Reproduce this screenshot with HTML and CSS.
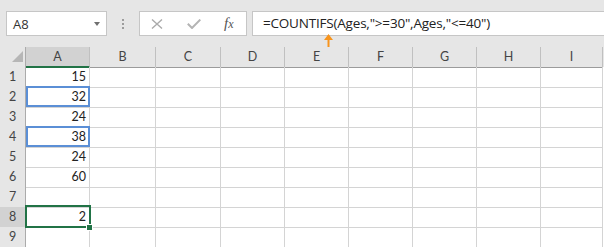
FILE: index.html
```html
<!DOCTYPE html>
<html lang="en">
<head>
<meta charset="UTF-8">
<meta name="viewport" content="width=device-width, initial-scale=1.0">
<title>COUNTIFS</title>
<link rel="stylesheet" href="styles.css">
</head>
<body>

<div class="ribbon">
    <div class="namebox"><span>A8</span><span class="caret"></span></div>
    <div class="grip"><i></i><i></i><i></i></div>
    <div class="fbtns">
        <svg width="12" height="10" viewBox="0 0 12 10"><path d="M1 0.5 L11 9.5 M11 0.5 L1 9.5" stroke="#ababab" stroke-width="1.4" fill="none"/></svg>
        <svg width="14" height="10" viewBox="0 0 14 10"><path d="M0.8 4.8 L5 9 L13.3 0.6" stroke="#b4b4b4" stroke-width="2" fill="none"/></svg>
        <span class="fx">f<small>x</small></span>
    </div>
    <div class="formula">=COUNTIFS(Ages,"&gt;=30",Ages,"&lt;=40")</div>
    <svg class="pointer" width="9" height="13" viewBox="0 0 9 13"><path d="M4.5 0 L9 6 L5.5 6 L5.5 13 L3.5 13 L3.5 6 L0 6 Z" fill="#f7941d"/></svg>
</div>

<div class="sheet">
    <div class="row head">
        <div class="corner"><svg width="26" height="19" viewBox="0 0 26 19"><path d="M23 4 L23 15 L12 15 Z" fill="#b6b6b6"/></svg></div>
        <div class="on">A</div><div>B</div><div>C</div><div>D</div><div>E</div><div>F</div><div>G</div><div>H</div><div>I</div><span></span>
    </div>
    <div class="row"><b>1</b><div class="num">15</div><div></div><div></div><div></div><div></div><div></div><div></div><div></div><div></div><span></span></div>
    <div class="row"><b>2</b><div class="num ref">32</div><div></div><div></div><div></div><div></div><div></div><div></div><div></div><div></div><span></span></div>
    <div class="row"><b>3</b><div class="num">24</div><div></div><div></div><div></div><div></div><div></div><div></div><div></div><div></div><span></span></div>
    <div class="row"><b>4</b><div class="num ref">38</div><div></div><div></div><div></div><div></div><div></div><div></div><div></div><div></div><span></span></div>
    <div class="row"><b>5</b><div class="num">24</div><div></div><div></div><div></div><div></div><div></div><div></div><div></div><div></div><span></span></div>
    <div class="row"><b>6</b><div class="num">60</div><div></div><div></div><div></div><div></div><div></div><div></div><div></div><div></div><span></span></div>
    <div class="row"><b>7</b><div class="num"></div><div></div><div></div><div></div><div></div><div></div><div></div><div></div><div></div><span></span></div>
    <div class="row"><b class="on">8</b><div class="num active">2</div><div></div><div></div><div></div><div></div><div></div><div></div><div></div><div></div><span></span></div>
    <div class="row"><b>9</b><div class="num"></div><div></div><div></div><div></div><div></div><div></div><div></div><div></div><div></div><span></span></div>
</div>

</body>
</html>
```

FILE: styles.css
```css
body {
    margin: 0;
    background: #fff;
    overflow: hidden;
}

.ribbon {
    position: relative;
    display: flex;
    align-items: flex-start;
    height: 47px;
    box-sizing: border-box;
    padding: 11px 0 0 6px;
    background: #e6e6e6;
    font-family: "Open Sans", sans-serif;
}

.namebox {
    display: flex;
    align-items: center;
    width: 101px;
    height: 25px;
    box-sizing: border-box;
    padding-left: 6px;
    background: #fff;
    border: 1px solid #c6c6c6;
    font-size: 13px;
    color: #333;
}

.caret {
    margin-left: auto;
    margin-right: 6px;
    border-left: 3.5px solid transparent;
    border-right: 3.5px solid transparent;
    border-top: 4px solid #707070;
}

.grip {
    display: flex;
    flex-direction: column;
    align-items: center;
    gap: 2px;
    width: 32px;
    padding-top: 8px;
}

.grip i {
    width: 2px;
    height: 2px;
    background: #9c9c9c;
}

.fbtns {
    display: flex;
    align-items: center;
    gap: 24px;
    width: 108px;
    height: 25px;
    box-sizing: border-box;
    padding-left: 11px;
    background: #fff;
    border: 1px solid #c6c6c6;
}

.fx {
    font-family: "Liberation Serif", serif;
    font-style: italic;
    font-size: 15px;
    color: #555;
    margin-left: -1px;
}

.fx small {
    font-size: 12px;
}

.formula {
    flex: 1;
    height: 25px;
    box-sizing: border-box;
    margin-left: 5px;
    margin-right: -2px;
    padding-left: 10px;
    background: #fff;
    border: 1px solid #c6c6c6;
    font-size: 13.5px;
    letter-spacing: -0.2px;
    line-height: 23px;
    color: #222;
    white-space: nowrap;
}

.pointer {
    position: absolute;
    left: 324px;
    top: 34px;
}

.sheet {
    font-family: Lato, sans-serif;
    font-size: 12.5px;
    color: #222;
}

.row {
    display: grid;
    grid-template-columns: 26px 64px 66px 65px 64px 64px 64px 64px 64px 62px 1fr;
    height: 20px;
}

.row > div,
.row > b {
    box-sizing: border-box;
    border-right: 1px solid #d4d4d4;
    border-bottom: 1px solid #d4d4d4;
    line-height: 20px;
}

.row > b {
    font-weight: normal;
    text-align: center;
    color: #444;
    background: #e6e6e6;
    border-right-color: #ababab;
}

.head {
    background: #e6e6e6;
}

.head > div {
    text-align: center;
    color: #444;
    border-right-color: #c0c0c0;
    border-bottom-color: #9b9b9b;
}

.head .corner {
    border-right-color: #ababab;
}

.corner svg {
    display: block;
}

.head .on {
    background: #d2d2d2;
    border-bottom: 2px solid #217346;
    line-height: 19px;
}

.row > b.on {
    background: #d2d2d2;
}

.num {
    position: relative;
    text-align: right;
    padding-right: 3px;
}

.ref::after {
    content: "";
    position: absolute;
    top: -1px;
    left: 0;
    right: -1px;
    bottom: 0;
    border: 2px solid #5b8fd6;
}

.active::after {
    content: "";
    position: absolute;
    top: -2px;
    left: -1px;
    right: -2px;
    bottom: -1px;
    border: 2px solid #217346;
    z-index: 2;
}

.active::before {
    content: "";
    position: absolute;
    right: -4px;
    bottom: -4px;
    width: 5px;
    height: 5px;
    background: #217346;
    border: 1px solid #fff;
    z-index: 3;
}
```
